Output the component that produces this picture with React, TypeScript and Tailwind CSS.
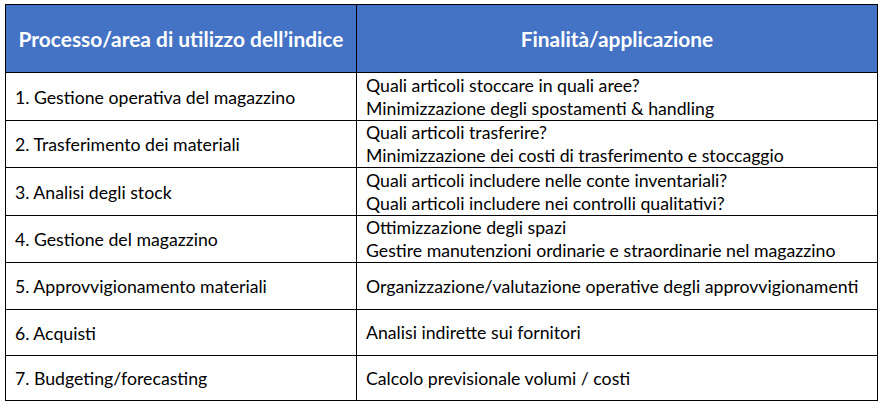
const ROWS: { left: string; right: string[]; h: string }[] = [
  {
    left: "1. Gestione operativa del magazzino",
    right: ["Quali articoli stoccare in quali aree?", "Minimizzazione degli spostamenti & handling"],
    h: "h-[48px]",
  },
  {
    left: "2. Trasferimento dei materiali",
    right: ["Quali articoli trasferire?", "Minimizzazione dei costi di trasferimento e stoccaggio"],
    h: "h-[47px]",
  },
  {
    left: "3. Analisi degli stock",
    right: ["Quali articoli includere nelle conte inventariali?", "Quali articoli includere nei controlli qualitativi?"],
    h: "h-[48px]",
  },
  {
    left: "4. Gestione del magazzino",
    right: ["Ottimizzazione degli spazi", "Gestire manutenzioni ordinarie e straordinarie nel magazzino"],
    h: "h-[47px]",
  },
  {
    left: "5. Approvvigionamento materiali",
    right: ["Organizzazione/valutazione operative degli approvvigionamenti"],
    h: "h-[47px]",
  },
  { left: "6. Acquisti", right: ["Analisi indirette sui fornitori"], h: "h-[46px]" },
  { left: "7. Budgeting/forecasting", right: ["Calcolo previsionale volumi / costi"], h: "h-[45px]" },
];

export default function App() {
  return (
    <div className="w-[884px] h-[408px] bg-white pl-[5px] pt-[4px] font-['Lato','Open_Sans',sans-serif] text-[17.7px] text-black">
      <table className="w-[872px] border-collapse table-fixed">
        <colgroup>
          <col className="w-[351px]" />
          <col className="w-[521px]" />
        </colgroup>
        <thead>
          <tr className="h-[68px] bg-[#4472c4] text-white text-[20.9px] font-bold">
            <th className="border border-black text-center align-middle p-0 whitespace-nowrap">Processo/area di utilizzo dell’indice</th>
            <th className="border border-black text-center align-middle p-0">Finalità/applicazione</th>
          </tr>
        </thead>
        <tbody>
          {ROWS.map((r) => (
            <tr key={r.left} className={r.h}>
              <td className="border border-black px-[9px] py-0 align-middle pt-[3px] whitespace-nowrap">{r.left}</td>
              <td className="border border-black px-[9px] py-0 align-middle leading-[23px] whitespace-nowrap">
                {r.right.map((line) => (
                  <div key={line}>{line}</div>
                ))}
              </td>
            </tr>
          ))}
        </tbody>
      </table>
    </div>
  );
}
